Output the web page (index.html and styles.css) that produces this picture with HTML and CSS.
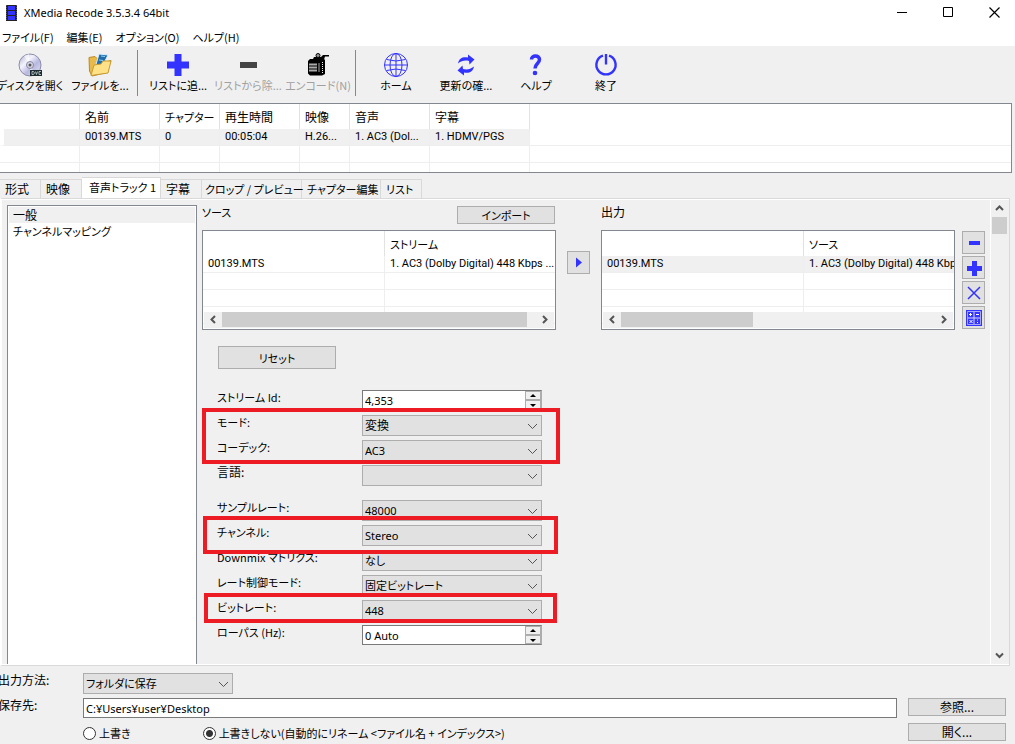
FILE: index.html
```html
<!DOCTYPE html>
<html lang="ja">
<head>
<meta charset="utf-8">
<title>XMedia Recode 3.5.3.4 64bit</title>
<link rel="stylesheet" href="styles.css">
</head>
<body>
<header class="titlebar">
  <svg class="app-icon" width="11" height="16" viewBox="0 0 11 16"><path fill="#222" d="M0 0h11v16H0z"/><path fill="#33f" d="M2 1h7v4H2zM2 6h7v4H2zM2 11h7v4H2z"/><path stroke="#555" stroke-dasharray="1 1" d="M.5 0v16M10.500 0v16"/></svg>
  <h1>XMedia Recode 3.5.3.4 64bit</h1>
  <div class="window-buttons">
    <button aria-label="最小化"><svg width="11" height="11"><path stroke="#000" d="M0 5.500h10"/></svg></button>
    <button aria-label="最大化"><svg width="11" height="11"><path fill="none" stroke="#000" d="M.5.5h9v9h-9z"/></svg></button>
    <button aria-label="閉じる"><svg width="11" height="11"><path stroke="#000" stroke-width="1.200" d="M.5.5l10 10M10.500.5l-10 10"/></svg></button>
  </div>
</header>
<nav class="menubar">
  <button>ファイル(F)</button><button>編集(E)</button><button>オプション(O)</button><button>ヘルプ(H)</button>
</nav>
<div class="toolbar">
  <button><svg width="26" height="24" viewBox="0 0 26 24"><defs><linearGradient id="disc" x1="0" y1="0" x2="1" y2="1"><stop offset="0" stop-color="#aaaac8"/><stop offset=".35" stop-color="#f4f4ff"/><stop offset=".6" stop-color="#b8b8e0"/><stop offset="1" stop-color="#e4e4f4"/></linearGradient></defs><circle cx="13" cy="12" r="11" fill="url(#disc)" stroke="#8c8ca8"/><path fill="#fff" opacity=".6" d="M13 12L7 3l5-2zM13 12l5 9-5 2z"/><circle cx="13" cy="12" r="3.500" fill="#d8d8e8" stroke="#8888a0"/><circle cx="13" cy="12" r="1.500" fill="#555"/><path fill="#1c2c30" d="M13 17h12v6H13z"/><path fill="none" stroke="#ccd6d8" stroke-width=".8" d="M15 18.500v3h1.500l1-1.500-1-1.500zM18.500 18.500l1 3 1-3M24 18.500h-2v3h2"/></svg><span>ディスクを開く</span></button>
  <button><svg width="24" height="24" viewBox="0 0 24 24"><path fill="#e9b949" stroke="#b98a22" d="M1 4.500l6-1 2 2 3 0v5l11-3-4 12L4 23 1.500 18z"/><path fill="#226da8" stroke="#d7eefc" d="M11 1l9 1-6 12-7 1z"/><path stroke="#8bd0f6" d="M13 3l4 .5M11 7l4 .5"/><path fill="#ffe187" stroke="#c79a32" d="M3 22.500L6 12l7-1 2-3h8l-3 12z"/></svg><span>ファイルを...</span></button>
  <i class="separator"></i>
  <button><svg width="24" height="24" viewBox="0 0 24 24"><path fill="#33f" d="M8.500 1h7v7.500H23v7h-7.500V23h-7v-7.500H1v-7h7.500z"/></svg><span>リストに追...</span></button>
  <button disabled><svg width="24" height="24"><path fill="#444" d="M4 9h17v6H4z"/></svg><span>リストから除...</span></button>
  <button disabled><svg width="24" height="24" viewBox="0 0 24 24"><path fill="#000" d="M8 4h7l2-2h6v1.500h-4l-1 3h1v14.500l-3 1.500H4l-2-2V8l2-2h3z"/><circle cx="12" cy="2.500" r="2" fill="#999" stroke="#000"/><path fill="#555" d="M3 10h8v9H3z"/><path stroke="#aaa" d="M3 11.500h8M3 14.500h8M3 17.500h8M13 10v9"/><path stroke="#eee" stroke-dasharray="1 1" d="M16.500 9v11"/></svg><span>エンコード(N)</span></button>
  <i class="separator"></i>
  <button><svg width="24" height="24" viewBox="0 0 24 24"><g fill="none" stroke="#33f"><circle cx="12" cy="12" r="11.500"/><ellipse cx="12" cy="12" rx="6" ry="11.500"/><path d="M12 .5v23M.5 12h23M2.500 6.500q9.500 3 19 0M2.500 17.500q9.500-3 19 0"/></g></svg><span>ホーム</span></button>
  <button><svg width="24" height="24" viewBox="0 0 24 24"><path fill="#33f" d="M4 10.500C5 5 9 3.500 14 4.500V1.500l6.500 5-5 5-.5-3.500C11 7 8 7.500 4 10.500zM20 13.500c-1 5.500-5 7-10 6v3l-6.500-5 5-5 .5 3.500c4 1 7 .5 11-2.500z"/></svg><span>更新の確...</span></button>
  <button><svg width="24" height="24" viewBox="0 0 24 24"><path fill="none" stroke="#33f" stroke-width="3.500" d="M7.500 6.500C7.500 1.500 15.500 2 15.500 6.500c0 4-4.500 4-4.500 9"/><circle cx="11" cy="20" r="2.300" fill="#33f"/></svg><span>ヘルプ</span></button>
  <button><svg width="24" height="24" viewBox="0 0 24 24"><path fill="none" stroke="#33f" stroke-width="2.400" d="M9 2.700a9.600 9.600 0 1 0 6 0M12 1v10.500"/></svg><span>終了</span></button>
</div>

<main class="workspace">
  <div class="list files">
    <table>
      <colgroup><col class="w80"><col class="w80"><col class="w60"><col class="w80"><col class="w50"><col class="w80"><col class="w100"><col></colgroup>
      <thead><tr><th></th><th>名前</th><th class="kana">チャプター</th><th>再生時間</th><th>映像</th><th>音声</th><th>字幕</th><th></th></tr></thead>
      <tbody>
        <tr class="selected"><td></td><td>00139.MTS</td><td>0</td><td>00:05:04</td><td>H.26...</td><td>1. AC3 (Dol...</td><td>1. HDMV/PGS</td><td></td></tr>
        <tr><td></td><td></td><td></td><td></td><td></td><td></td><td></td><td></td></tr>
        <tr><td></td><td></td><td></td><td></td><td></td><td></td><td></td><td></td></tr>
      </tbody>
    </table>
  </div>

  <div class="tabs" role="tablist">
    <button role="tab" class="tab t40 kanji">形式</button><button role="tab" class="tab t40 kanji">映像</button><button role="tab" class="tab active" aria-selected="true">音声トラック 1</button><button role="tab" class="tab t40 kanji">字幕</button><button role="tab" class="tab t100">クロップ / プレビュー</button><button role="tab" class="tab t80">チャプター編集</button><button role="tab" class="tab t40">リスト</button>
  </div>

  <section class="panel">
    <ul class="categories"><li class="current kanji">一般</li><li>チャンネルマッピング</li></ul>
    <div class="content">
      <div class="streams">
        <section class="stream">
          <div class="stream-head"><h2>ソース</h2><button class="push">インポート</button></div>
          <div class="list">
            <table><colgroup><col class="source-file"><col></colgroup>
              <thead><tr><th></th><th class="kana">ストリーム</th></tr></thead>
              <tbody><tr><td>00139.MTS</td><td>1. AC3 (Dolby Digital) 448 Kbps ...</td></tr><tr><td></td><td></td></tr><tr><td></td><td></td></tr><tr><td></td><td></td></tr></tbody>
            </table>
            <div class="hscroll"><svg width="18" height="15"><path class="arrow" d="M11 4L7.500 7.500 11 11"/></svg><div class="track"><div class="thumb wide"></div></div><svg width="18" height="15"><path class="arrow" d="M7 4l3.500 3.500L7 11"/></svg></div>
          </div>
        </section>
        <button class="tool transfer" aria-label="追加"><svg width="21" height="21"><path fill="#33f" d="M8 5.500l6 5-6 5z"/></svg></button>
        <section class="stream">
          <div class="stream-head"><h2 class="kanji">出力</h2></div>
          <div class="list">
            <table><colgroup><col class="output-file"><col></colgroup>
              <thead><tr><th></th><th class="kana">ソース</th></tr></thead>
              <tbody><tr class="selected"><td>00139.MTS</td><td>1. AC3 (Dolby Digital) 448 Kbp</td></tr><tr><td></td><td></td></tr><tr><td></td><td></td></tr><tr><td></td><td></td></tr></tbody>
            </table>
            <div class="hscroll"><svg width="18" height="15"><path class="arrow" d="M11 4L7.500 7.500 11 11"/></svg><div class="track"><div class="thumb narrow"></div></div><svg width="18" height="15"><path class="arrow" d="M7 4l3.500 3.500L7 11"/></svg></div>
          </div>
        </section>
        <div class="tools">
          <button class="tool" aria-label="削除"><svg width="21" height="21"><path fill="#33f" d="M6 9h11v4H6z"/></svg></button>
          <button class="tool" aria-label="新規"><svg width="21" height="21"><path fill="#33f" d="M9 4h5v5h5v5h-5v5H9v-5H4V9h5z"/></svg></button>
          <button class="tool" aria-label="クリア"><svg width="21" height="21"><path stroke="#33f" stroke-width="1.500" d="M5 5l12 12M17 5L5 17"/></svg></button>
          <button class="tool" aria-label="計算"><svg width="21" height="21"><path fill="#33f" d="M3 3h16v16H3z"/><g fill="none" stroke="#fff"><path stroke="#a8a8ff" d="M4.500 4.500h13v13h-13z"/><path stroke="#d8d8ff" d="M11 5v12M5 11h12"/><path d="M6 7.500h3M7.500 6v3M13 7.500h3M6.500 13l3 3M9.500 13l-3 3M14.500 12.500v1M14.500 15v1"/></g></svg></button>
        </div>
      </div>
      <button class="push reset">リセット</button>
      <form class="settings">
        <div class="field"><label for="stream-id">ストリーム Id:</label><div class="spin"><input id="stream-id" type="text" value="4,353"><button type="button" aria-label="増やす"><svg width="14" height="8"><path d="M7 2l3 3H4z"/></svg></button><button type="button" aria-label="減らす"><svg width="14" height="8"><path d="M7 6L4 3h6z"/></svg></button></div></div>
        <div class="field"><label for="mode">モード:</label><div class="combo kanji"><select id="mode"><option>変換</option></select><svg width="11" height="7"><path d="M1 1l4.500 4.500L10 1"/></svg></div></div>
        <div class="field"><label for="codec">コーデック:</label><div class="combo"><select id="codec"><option>AC3</option></select><svg width="11" height="7"><path d="M1 1l4.500 4.500L10 1"/></svg></div></div>
        <div class="field"><label class="kanji" for="language">言語:</label><div class="combo"><select id="language"><option></option></select><svg width="11" height="7"><path d="M1 1l4.500 4.500L10 1"/></svg></div></div>
        <div class="field group"><label for="rate">サンプルレート:</label><div class="combo"><select id="rate"><option>48000</option></select><svg width="11" height="7"><path d="M1 1l4.500 4.500L10 1"/></svg></div></div>
        <div class="field"><label for="channel">チャンネル:</label><div class="combo"><select id="channel"><option>Stereo</option></select><svg width="11" height="7"><path d="M1 1l4.500 4.500L10 1"/></svg></div></div>
        <div class="field"><label for="downmix">Downmix マトリクス:</label><div class="combo"><select id="downmix"><option>なし</option></select><svg width="11" height="7"><path d="M1 1l4.500 4.500L10 1"/></svg></div></div>
        <div class="field"><label for="control">レート制御モード:</label><div class="combo"><select id="control"><option>固定ビットレート</option></select><svg width="11" height="7"><path d="M1 1l4.500 4.500L10 1"/></svg></div></div>
        <div class="field"><label for="bitrate">ビットレート:</label><div class="combo"><select id="bitrate"><option>448</option></select><svg width="11" height="7"><path d="M1 1l4.500 4.500L10 1"/></svg></div></div>
        <div class="field"><label for="lowpass">ローパス (Hz):</label><div class="spin"><input id="lowpass" type="text" value="0 Auto"><button type="button" aria-label="増やす"><svg width="14" height="8"><path d="M7 2l3 3H4z"/></svg></button><button type="button" aria-label="減らす"><svg width="14" height="8"><path d="M7 6L4 3h6z"/></svg></button></div></div>
        <div class="mark mark-codec"></div><div class="mark mark-channel"></div><div class="mark mark-bitrate"></div>
      </form>
    </div>
    <div class="vscroll"><svg width="17" height="17"><path class="arrow" d="M5 10l3.500-3.500L12 10"/></svg><div class="thumb"></div><svg width="17" height="17"><path class="arrow" d="M5 6.500l3.500 3.500L12 6.500"/></svg></div>
  </section>
</main>

<footer class="destination">
  <label class="kanji" for="method">出力方法:</label>
  <div class="combo method"><select id="method"><option>フォルダに保存</option></select><svg width="11" height="7"><path d="M1 1l4.500 4.500L10 1"/></svg></div><span></span>
  <label class="kanji" for="folder">保存先:</label>
  <input id="folder" class="path" type="text" value="C:¥Users¥user¥Desktop"><button class="push kanji">参照...</button>
  <span></span>
  <div class="choices"><label><input type="radio" name="overwrite">上書き</label><label><input type="radio" name="overwrite" checked>上書きしない(自動的にリネーム &lt;ファイル名 + インデックス&gt;)</label></div><button class="push kanji">開く...</button>
</footer>
</body>
</html>
```
FILE: styles.css
```css
* { box-sizing: border-box; }
body {
  margin: 0;
  min-height: 100vh;
  display: flex;
  flex-direction: column;
  background: #f0f0f0;
  color: #000;
  font: 11px/16px "Noto Sans CJK JP", sans-serif;
  font-feature-settings: "palt";
  overflow: hidden;
}
button, input, select { font: inherit; font-feature-settings: inherit; color: inherit; margin: 0; padding: 0; border-radius: 0; }
button { border: 0; background: none; white-space: nowrap; }
svg { display: block; flex: none; }
h1, h2 { margin: 0; font-size: 11px; font-weight: 400; }
.kanji { font-size: 12px; }

.titlebar { display: flex; align-items: center; height: 25px; padding-left: 6px; background: #fff; }
.titlebar h1 { flex: 1; padding-left: 7px; font-family: "Noto Sans", sans-serif; }
.window-buttons { display: flex; margin-right: -2px; }
.window-buttons button { width: 46px; height: 25px; display: grid; place-items: center; }

.menubar { display: flex; gap: 13px; height: 21px; padding: 0 0 0 2px; background: #fff; }
.menubar button { line-height: 24px; }

.toolbar { display: flex; height: 57px; margin-left: -5px; padding-top: 7px; }
.toolbar button { width: 70px; display: flex; flex-direction: column; align-items: center; }
.toolbar button:disabled { color: #a0a0a0; }
.separator { width: 8px; height: 46px; margin-top: -3px; background: linear-gradient(#888, #888) 2px 0 / 1px 100% no-repeat; }

.workspace { flex: 1; display: flex; flex-direction: column; padding-right: 5px; }
.list { height: 100px; border: 1px solid #828790; background: #fff; overflow: hidden; display: flex; flex-direction: column; }
.list table { width: 100%; margin-bottom: -20px; table-layout: fixed; border-collapse: separate; border-spacing: 0; }
.list th, .list td { padding: 0 0 0 5px; text-align: left; font-weight: 400; white-space: nowrap; overflow: hidden; border-right: 1px solid #eee; }
.list th { height: 25px; border-color: #e2e2e2; font-size: 12px; }
.list .kana { font-size: 11px; }
.list td { height: 17px; border-bottom: 1px solid #eee; font: 11px/16px Roboto, sans-serif; }
.list th:last-child, .list td:last-child { border-right: 0; }
.list .selected td { background: #f0f0f0; }
.files { height: 70px; margin-right: -2px; border-left: 0; }
.files .selected td:last-child { background: #fff; }
.files .selected td:first-child { border-left: 4px solid #fff; }
.w50 { width: 50px; } .w60 { width: 60px; } .w80 { width: 80px; } .w100 { width: 100px; }
.source-file { width: 182px; } .output-file { width: 202px; }

.tabs { display: flex; align-items: flex-end; height: 25px; }
.tab { flex: none; height: 19px; border: 1px solid #d9d9d9; border-width: 1px 1px 0 0; padding: 0 0 0 5px; text-align: left; }
.tab.active { width: 79px; height: 21px; padding: 0 0 2px 7px; background: #fff; }
.t40 { width: 41px; } .t80 { width: 79px; } .t100 { width: 100px; padding-left: 3px; }

.panel { flex: 1; display: flex; border: 1px solid #d9d9d9; border-left: 2px solid #fff; box-shadow: inset 0 1px #fff, inset 0 -1px #fff; }
.categories { width: 190px; margin: 6px 0 1px 5px; padding: 1px; list-style: none; background: #fff; border: 1px solid #828790; border-bottom: 0; }
.categories li { padding-left: 4px; }
.categories .current { background: #f0f0f0; }
.content { flex: 1; min-width: 0; padding: 5px 5px 0 5px; }
.streams { display: flex; align-items: flex-start; }
.stream { flex: 1; min-width: 0; }
.stream-head { display: flex; justify-content: space-between; height: 26px; }
.push { height: 18px; width: 98px; line-height: 16px; background: #e1e1e1; border: 1px solid #adadad; }
.stream-head .push { margin-top: 2px; margin-right: 1px; }
.tool { width: 23px; height: 23px; background: #e1e1e1; border: 1px solid #adadad; }
.transfer { margin: 47px 11px 0; }
.tools { display: grid; gap: 2px; margin: 27px 0 0 7px; }
.hscroll { display: flex; flex: none; height: 16px; margin: auto 1px 1px; background: #f0f0f0; z-index: 1; }
.track { flex: 1; }
.thumb { background: #cdcdcd; }
.track .thumb { height: 15px; }
.wide { width: 97%; } .narrow { width: 42%; }
.arrow { fill: none; stroke: #555; stroke-width: 2; }
.vscroll { display: flex; flex-direction: column; width: 18px; margin: 1px 1px 1px 0; border-left: 1px solid #fff; }
.vscroll .thumb { width: 15px; height: 17px; margin: 0 auto auto; }

.reset { width: 118px; height: 23px; margin: 16px 0 0 16px; }
.settings { position: relative; padding: 21px 0 0 15px; }
.field { display: grid; grid-template-columns: 145px 180px; height: 25px; align-items: start; }
.field label { line-height: 14px; }
.field.group { margin-top: 10px; }
.combo { position: relative; }
.combo select { width: 100%; height: 21px; display: block; appearance: none; padding-left: 2px; background: #e1e1e1; border: 1px solid #adadad; }
.combo svg { position: absolute; right: 4px; top: 8px; fill: none; stroke: #555; pointer-events: none; }
.spin { display: grid; grid-template: 9px 9px / 1fr 16px; background: #fff; border: 1px solid #7a7a7a; border-right-color: #adadad; height: 20px; }
.spin input { grid-row: 1 / 3; min-width: 0; height: 18px; padding-left: 2px; border: 0; background: none; }
.spin button { background: #f0f0f0; border: 1px solid #adadad; overflow: hidden; }
.combo select, .spin input, .path { font-family: "Noto Sans", "Noto Sans CJK JP", sans-serif; }
.mark { position: absolute; border: 4px solid #ed1c24; pointer-events: none; }
.mark-codec { left: 0; top: 39px; width: 358px; height: 56px; }
.mark-channel { left: 1px; top: 147px; width: 355px; height: 38px; }
.mark-bitrate { left: 2px; top: 224px; width: 353px; height: 30px; }

.destination { display: grid; grid-template-columns: 83px 1fr 98px; grid-auto-rows: 25px; align-items: start; padding: 7px 9px 0 0; height: 78px; }
.destination > label { margin-left: -2px; line-height: 14px; }
.method { width: 150px; }
.path { height: 20px; margin-right: 11px; padding: 0 2px; border: 1px solid #7a7a7a; background: #fff; }
.choices { display: flex; gap: 72px; }
.choices label { display: flex; align-items: center; gap: 3px; height: 20px; }
.choices input { appearance: none; width: 13px; height: 13px; border: 1px solid #333; border-radius: 50%; background: #fff; }
.choices input:checked { background: radial-gradient(circle, #333 3px, #fff 4px); }
```
